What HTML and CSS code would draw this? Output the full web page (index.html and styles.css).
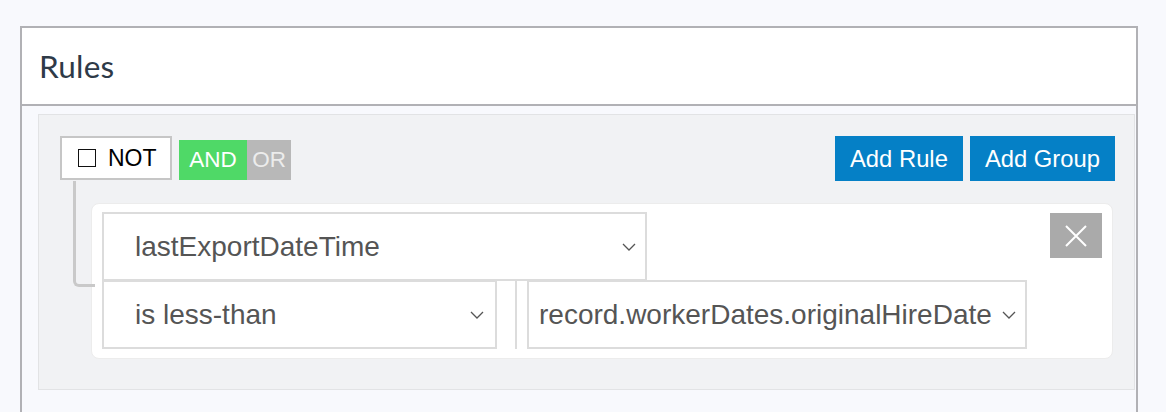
FILE: index.html
```html
<!DOCTYPE html>
<html lang="en">
<head>
<meta charset="utf-8">
<title>Rules</title>
<link rel="stylesheet" href="styles.css">
</head>
<body>
<section class="panel">
  <header class="panel-head"><h2 class="panel-title">Rules</h2></header>
  <div class="panel-body">
    <div class="group">
      <div class="group-head">
        <div class="conds">
          <label class="not-box"><span class="chk"></span><span>NOT</span></label>
          <div class="logic">
            <span class="logic-btn active">AND</span>
            <span class="logic-btn">OR</span>
          </div>
        </div>
        <div class="actions">
          <button class="btn">Add Rule</button>
          <button class="btn">Add Group</button>
        </div>
      </div>
      <div class="rules">
        <div class="rule">
          <div class="rule-fields">
            <div class="sel sel-field">
              <span>lastExportDateTime</span>
              <svg class="chev" width="14" height="8" viewBox="0 0 14 8"><polyline points="1,1 7,7 13,1" fill="none" stroke="#555" stroke-width="1.3"/></svg>
            </div>
            <div class="rule-row">
              <div class="sel sel-op">
                <span>is less-than</span>
                <svg class="chev" width="14" height="8" viewBox="0 0 14 8"><polyline points="1,1 7,7 13,1" fill="none" stroke="#555" stroke-width="1.3"/></svg>
              </div>
              <div class="sep"></div>
              <div class="sel sel-val">
                <span>record.workerDates.originalHireDate</span>
                <svg class="chev" width="14" height="8" viewBox="0 0 14 8"><polyline points="1,1 7,7 13,1" fill="none" stroke="#555" stroke-width="1.3"/></svg>
              </div>
            </div>
          </div>
          <button class="del" aria-label="Delete">
            <svg width="24" height="24" viewBox="0 0 24 24"><path d="M2 2 L22 22 M22 2 L2 22" stroke="#fff" stroke-width="2" fill="none"/></svg>
          </button>
        </div>
      </div>
    </div>
  </div>
</section>
</body>
</html>
```
FILE: styles.css
```css
* { box-sizing: border-box; }
html, body { margin: 0; padding: 0; }
body {
  background: #f8f9fd;
  font-family: "Liberation Sans", Arial, sans-serif;
  height: 412px;
  overflow: hidden;
  padding: 26px 0 0 20px;
}
.panel {
  width: 1118px;
  height: 386px;
  border: 2px solid #b1b1b5;
  border-bottom: 0;
  background: #f8f9fd;
}
.panel-head {
  background: #fff;
  height: 78px;
  border-bottom: 2px solid #b1b1b5;
  padding-left: 17px;
  display: flex;
  align-items: center;
}
.panel-title {
  margin: 0;
  font-family: "Lato", "Open Sans", sans-serif;
  font-weight: 400;
  font-size: 31.5px;
  color: #2e3a48;
  letter-spacing: 0.2px;
}
.panel-body {
  padding: 8px 1px 0 16px;
}
.group {
  border: 1px solid #e2e3e5;
  background: #f1f2f4;
  padding: 21px 19px 30px 21px;
}
.group-head {
  display: flex;
  justify-content: space-between;
  align-items: flex-start;
}
.conds {
  display: flex;
  align-items: flex-end;
  gap: 7px;
  height: 44px;
}
.not-box {
  width: 112px;
  height: 44px;
  border: 2px solid #c6c6c6;
  background: #fff;
  display: flex;
  align-items: center;
  padding-left: 16px;
  gap: 12px;
  font-size: 23px;
  color: #000;
}
.chk {
  width: 18px;
  height: 18px;
  border: 1.5px solid #111;
  display: inline-block;
}
.logic { display: flex; height: 40px; }
.logic-btn {
  display: flex;
  align-items: center;
  justify-content: center;
  font-size: 22.5px;
  color: #ececec;
  background: #b8b8b8;
  width: 44px;
}
.logic-btn.active {
  background: #4fd967;
  color: #fff;
  width: 68px;
}
.actions { display: flex; gap: 7px; }
.btn {
  height: 45px;
  border: 0;
  background: #0580c6;
  color: #fff;
  font-family: "Liberation Sans", Arial, sans-serif;
  font-size: 23.8px;
  padding: 0 15px;
}
.rules {
  margin-top: 22px;
  padding-left: 31px;
  padding-right: 2px;
}
.rule {
  position: relative;
  background: #fff;
  border: 1px solid #ececec;
  border-radius: 8px;
  padding: 8px 10px 9px 10px;
  display: flex;
  justify-content: space-between;
  align-items: flex-start;
}
.rule::before {
  content: "";
  position: absolute;
  left: -19px;
  top: -23px;
  width: 19px;
  height: 103px;
  border-left: 3px solid #c9c9c9;
  border-bottom: 3px solid #c9c9c9;
  border-bottom-left-radius: 6px;
}
.rule-fields { display: flex; flex-direction: column; }
.sel {
  border: 2px solid #dcdcdc;
  background: #fff;
  height: 69px;
  display: flex;
  align-items: center;
  justify-content: space-between;
  font-size: 28px;
  color: #555;
}
.sel-field { width: 545px; padding: 0 9px 0 31px; }
.rule-row { display: flex; margin-top: -1px; }
.sel-op { width: 395px; padding: 0 11px 0 31px; }
.sep {
  width: 2px;
  background: #dcdcdc;
  margin: 1px 10px 0 18px;
}
.sel-val { width: 500px; padding: 0 9px 0 10px; }
.chev { flex: none; }
.del {
  width: 52px;
  height: 45px;
  margin-top: 1px;
  border: 0;
  background: #aaaaaa;
  display: flex;
  align-items: center;
  justify-content: center;
  padding: 0;
}
```
